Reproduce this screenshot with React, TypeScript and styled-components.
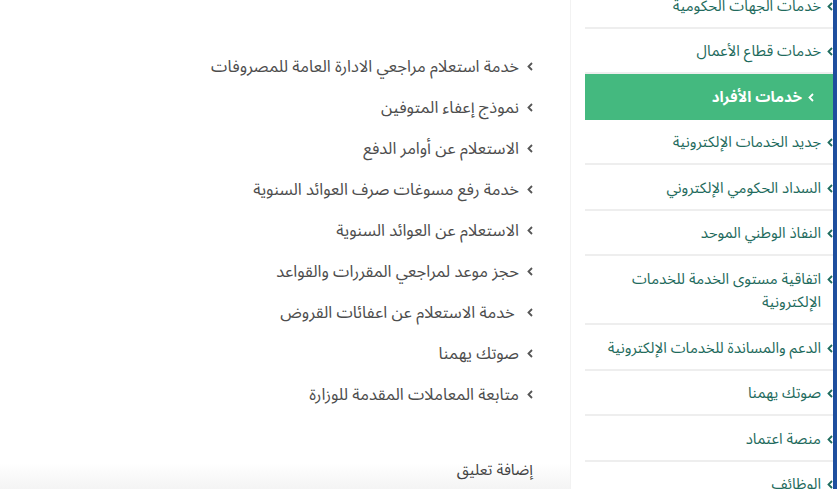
import React, { FC } from "react";
import styled, { createGlobalStyle } from "styled-components";

const GlobalStyle = createGlobalStyle`
  html, body {
    margin: 0;
    padding: 0;
    background: #fff;
    overflow: hidden;
  }
  body {
    font-family: "Noto Sans Arabic", "DejaVu Sans", sans-serif;
    direction: rtl;
  }
`;

const Page = styled.div`
  display: flex;
  height: 489px;
  width: 837px;
  overflow: hidden;
`;

const ScrollBar = styled.div`
  width: 4px;
  flex: none;
  background: #1f4f9f;
`;

const Sidebar = styled.aside`
  width: 248px;
  flex: none;
  padding-left: 14px;
  border-left: 1px solid #f2f2f2;
  box-shadow: -6px 0 14px rgba(0, 0, 0, 0.03);
`;

const SideList = styled.ul`
  list-style: none;
  margin: -17px 0 0;
  padding: 0;
`;

const SideItem = styled.li<{ $active?: boolean }>`
  display: flex;
  align-items: flex-start;
  gap: 6px;
  padding: 11.5px ${(p) => (p.$active ? "19px" : "0")} 8.5px 0;
  line-height: 23.5px;
  font-size: 15px;
  color: ${(p) => (p.$active ? "#fff" : "#1f6b5d")};
  font-weight: ${(p) => (p.$active ? "bold" : "normal")};
  background: ${(p) => (p.$active ? "#44b97f" : "transparent")};
  border-bottom: 2px solid ${(p) => (p.$active ? "#44b97f" : "#eeeeee")};
`;

const Main = styled.main`
  flex: 1;
  padding: 46px 37px 0 0;
  background: linear-gradient(to bottom, #fff calc(100% - 26px), #f4f4f4 100%);
`;

const LinkList = styled.ul`
  list-style: none;
  margin: 0;
  padding: 0;
`;

const LinkItem = styled.li`
  display: flex;
  align-items: center;
  gap: 8px;
  padding: 9.5px 0;
  line-height: 22px;
  font-size: 16.5px;
  color: #4d4d4d;
`;

const CommentTitle = styled.h4`
  margin: 44px 0 0;
  line-height: 22px;
  font-size: 15.5px;
  font-weight: normal;
  color: #444;
`;

const Chevron = styled.svg<{ $tone: string }>`
  flex: none;
  width: 6px;
  height: 9px;
  color: ${(p) => p.$tone};
`;

const Arrow: FC<{ tone: string; top?: number }> = ({ tone, top = 0 }) => (
  <Chevron $tone={tone} viewBox="0 0 6 9" style={{ marginTop: top }}>
    <path d="M5 1 L1.5 4.5 L5 8" fill="none" stroke="currentColor" strokeWidth="1.8" />
  </Chevron>
);

const sideLinks = [
  "خدمات الجهات الحكومية",
  "خدمات قطاع الأعمال",
  "خدمات الأفراد",
  "جديد الخدمات الإلكترونية",
  "السداد الحكومي الإلكتروني",
  "النفاذ الوطني الموحد",
  "اتفاقية مستوى الخدمة للخدمات الإلكترونية",
  "الدعم والمساندة للخدمات الإلكترونية",
  "صوتك يهمنا",
  "منصة اعتماد",
  "الوظائف",
];

const serviceLinks = [
  "خدمة استعلام مراجعي الادارة العامة للمصروفات",
  "نموذج إعفاء المتوفين",
  "الاستعلام عن أوامر الدفع",
  "خدمة رفع مسوغات صرف العوائد السنوية",
  "الاستعلام عن العوائد السنوية",
  "حجز موعد لمراجعي المقررات والقواعد",
  "\u00a0خدمة الاستعلام عن اعفائات القروض",
  "صوتك يهمنا",
  "متابعة المعاملات المقدمة للوزارة",
];

const App: FC = () => {
  return (
    <>
      <GlobalStyle />
      <Page>
        <ScrollBar />
        <Sidebar>
          <SideList>
            {sideLinks.map((label) => {
              const active = label === "خدمات الأفراد";
              return (
                <SideItem key={label} $active={active}>
                  <Arrow tone={active ? "#fff" : "#1f6b5d"} top={7} />
                  <span>{label}</span>
                </SideItem>
              );
            })}
          </SideList>
        </Sidebar>
        <Main>
          <LinkList>
            {serviceLinks.map((label) => (
              <LinkItem key={label}>
                <Arrow tone="#555" />
                <span>{label}</span>
              </LinkItem>
            ))}
          </LinkList>
          <CommentTitle>إضافة تعليق</CommentTitle>
        </Main>
      </Page>
    </>
  );
};

export default App;
